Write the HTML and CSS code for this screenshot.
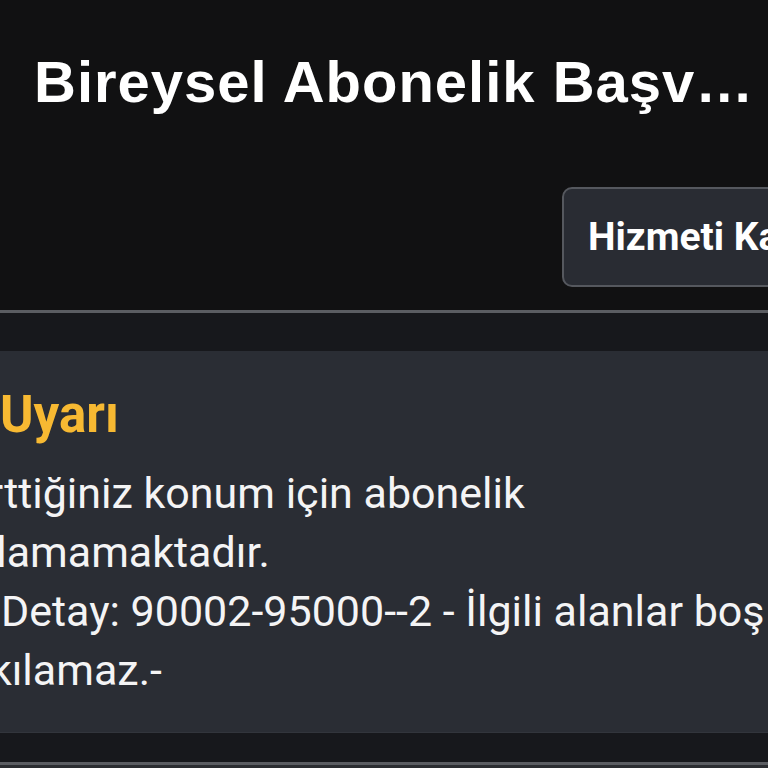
FILE: index.html
```html
<!DOCTYPE html>
<html lang="tr">
<head>
<meta charset="utf-8">
<title>Bireysel Abonelik Başvurusu</title>
<link rel="stylesheet" href="styles.css">
</head>
<body>
<div class="page">
  <header class="header">
    <h1 class="title">Bireysel Abonelik Başvurusu</h1>
    <div class="actions">
      <button class="btn" type="button">Hizmeti Kapat</button>
    </div>
  </header>
  <main class="content">
    <section class="alert">
      <div class="alert-body">
        <h2 class="alert-title">Uyarı</h2>
        <p class="alert-text">Belirttiğiniz konum için abonelik yapılamamaktadır.</p>
        <p class="alert-text alert-detail">Detay: 90002-95000--2 - İlgili alanlar boş bırakılamaz.-</p>
      </div>
    </section>
  </main>
  <div class="next"></div>
</div>
</body>
</html>
```
FILE: styles.css
```css
html, body {
  margin: 0;
  padding: 0;
  background: #111112;
}

.page {
  width: 768px;
  height: 768px;
  overflow: hidden;
  font-family: Roboto, "Noto Sans", sans-serif;
  color: #f4f4f5;
}

.header {
  background: #111112;
  padding: 49px 0 23px 34px;
  border-bottom: 3px solid #5b5d62;
}

.title {
  margin: 0;
  font-family: "Liberation Sans", Arial, sans-serif;
  font-weight: 700;
  font-size: 58px;
  line-height: 66px;
  letter-spacing: 1px;
  color: #ffffff;
  white-space: nowrap;
  overflow: hidden;
  text-overflow: ellipsis;
}

.actions {
  display: flex;
  margin-top: 72px;
  padding-left: 528px;
}

.btn {
  flex: none;
  margin: 0;
  padding: 23px 24px;
  border: 2px solid #55585e;
  border-radius: 10px;
  background: #292c33;
  color: #ffffff;
  font-family: Roboto, "Noto Sans", sans-serif;
  font-weight: 700;
  font-size: 39px;
  line-height: 50px;
  white-space: nowrap;
}

.content {
  background: #17181c;
  padding: 38px 0 29px;
  border-bottom: 3px solid #5b5d62;
}

.alert {
  background: #2a2d34;
  border-bottom: 1px solid #32353c;
  padding: 34px 0 32px;
}

.alert-body {
  margin-left: -82px;
  width: 886px;
}

.alert-title {
  margin: 0;
  padding-left: 82px;
  font-weight: 700;
  font-size: 51px;
  line-height: 60px;
  color: #f7b932;
}

.alert-text {
  margin: 0;
  font-size: 43px;
  line-height: 59px;
  color: #f4f4f5;
}

.alert-title + .alert-text {
  margin-top: 19px;
}

.alert-detail {
  text-indent: 83px;
}

.next {
  height: 60px;
  background: #2b2d31;
}
```
